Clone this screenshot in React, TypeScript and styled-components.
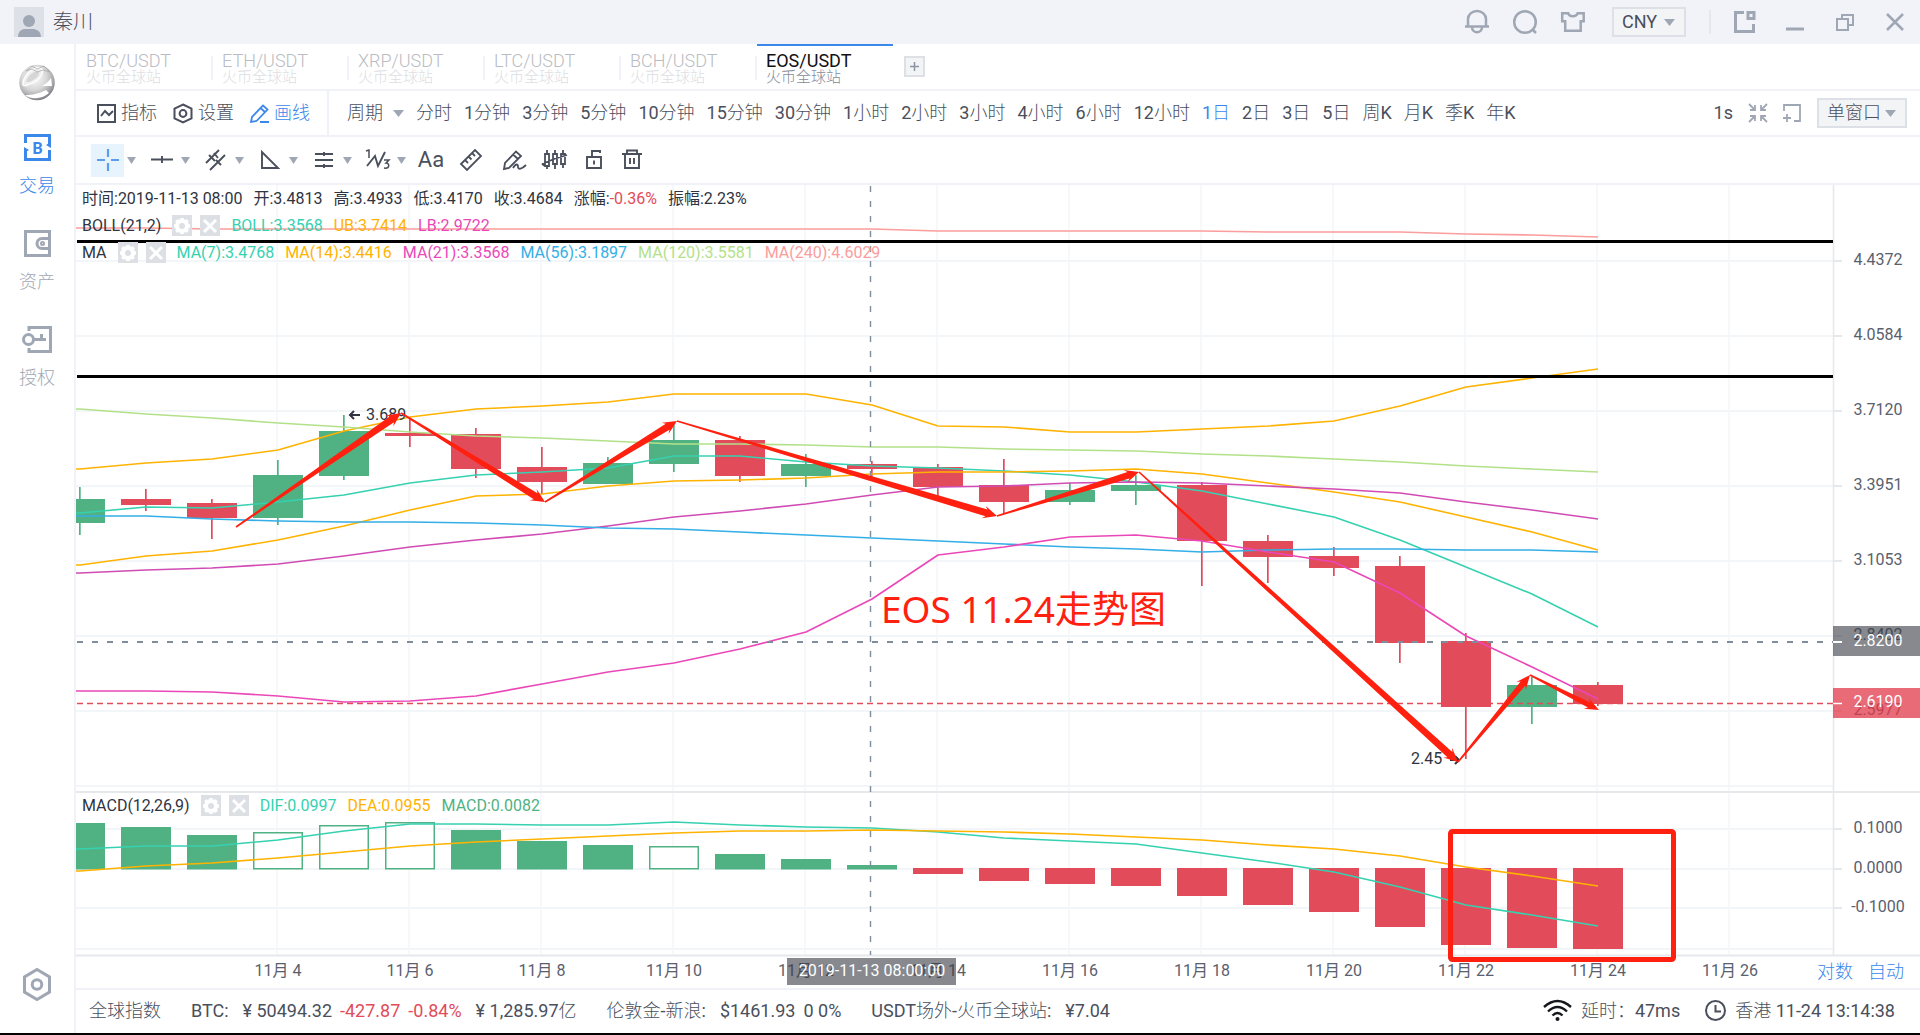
import React from "react";
import styled, { createGlobalStyle, css } from "styled-components";

const c = {
  bar: "#f2f3f8",
  line: "#f1f2f7",
  grid: "#f3f6f9",
  axis: "#e6e8eb",
  text: "#4a4f5c",
  dark: "#2f3440",
  icon: "#a0a7b4",
  blue: "#3b87ea",
  red: "#e24b5a",
  green: "#50b283",
  teal: "#36d1b0",
  yellow: "#ffb300",
  pink: "#ea48b8",
  purple: "#d04cb4",
  sky: "#34aee6",
  lime: "#b3e18a",
  salmon: "#fb9d9c",
  mark: "#ff2010",
};

const Global = createGlobalStyle`
  * { box-sizing: border-box; }
  html, body, #root { height: 100%; }
  body { margin: 0; background: #fff; line-height: 24px; }
  body, button, select { font-family: Roboto, "Noto Sans CJK SC Light", "Noto Sans CJK SC", sans-serif; font-size: 18px; color: ${c.text}; }
  button, select { background: none; border: 0; padding: 0; margin: 0; line-height: inherit; cursor: pointer; }
  svg { display: block; flex: none; overflow: visible; }
`;

const Page = styled.div`
  height: 100%;
  display: flex;
  flex-direction: column;
  border-bottom: 2px solid #000;
  overflow: hidden;
`;

/* ---------- title bar ---------- */
const TitleBar = styled.header`
  height: 44px;
  flex: none;
  display: flex;
  align-items: center;
  justify-content: space-between;
  padding-left: 14px;
  background: ${c.bar};
`;
const User = styled.div`
  display: flex;
  align-items: center;
  gap: 9px;
  font-size: 20px;
  line-height: 24px;
`;
const TitleTools = styled.div`
  display: flex;
  align-items: center;
`;
const IconButton = styled.button<{ $w?: number; $color?: string }>`
  width: ${(p) => p.$w ?? 48}px;
  height: 32px;
  display: flex;
  align-items: center;
  justify-content: center;
  color: ${(p) => p.$color ?? c.icon};
`;
const Currency = styled.div`
  padding: 0 23px 0 15px;
`;
const TitleDivider = styled.span`
  width: 2px;
  height: 24px;
  margin-right: 9px;
  background: #e4e7ed;
`;
const SelectBox = styled.label<{ $w: number }>`
  display: block;
  position: relative;
  width: ${(p) => p.$w}px;
  height: 30px;
  border: 2px solid #dde0e6;
  background: #f3f4f6;
  select {
    display: block;
    appearance: none;
    width: 100%;
    height: 26px;
    padding: 0 20px 0 8px;
    line-height: 26px;
    outline: 0;
  }
  svg {
    position: absolute;
    right: 9px;
    top: 10px;
    pointer-events: none;
  }
`;

/* ---------- frame ---------- */
const Body = styled.div`
  flex: 1;
  min-height: 0;
  display: flex;
`;
const Sidebar = styled.nav`
  width: 76px;
  flex: none;
  display: flex;
  flex-direction: column;
  align-items: center;
  padding: 20px 0 32px;
  border-right: 2px solid ${c.line};
`;
const SideItem = styled.button<{ $active?: boolean }>`
  height: 72px;
  margin-bottom: 24px;
  display: flex;
  flex-direction: column;
  align-items: center;
  justify-content: space-between;
  line-height: 40px;
  color: ${(p) => (p.$active ? c.blue : c.icon)};
  &:first-of-type { margin-top: 33px; }
`;
const SideBottom = styled.button`
  margin-top: auto;
  color: ${c.icon};
`;
const Main = styled.main`
  flex: 1;
  min-width: 0;
  display: flex;
  flex-direction: column;
`;
const Tabs = styled.div`
  height: 47px;
  flex: none;
  display: flex;
  align-items: stretch;
  padding-left: 1px;
  border-bottom: 2px solid ${c.line};
`;
const Tab = styled.button<{ $active?: boolean }>`
  display: flex;
  flex-direction: column;
  width: 136px;
  padding: 6px 0 0 9px;
  text-align: left;
  border-top: 2px solid ${(p) => (p.$active ? c.blue : "transparent")};
  background: linear-gradient(${c.line}, ${c.line}) no-repeat right 10px / ${(p) => (p.$active ? "0 0" : "2px 24px")};
  color: ${(p) => (p.$active ? "#111" : "#b9bcc2")};
  font-weight: 300;
  strong {
    font-size: 18px;
    line-height: 18px;
    font-weight: ${(p) => (p.$active ? 400 : 300)};
  }
  span {
    font-size: 15px;
    line-height: 15px;
    color: ${(p) => (p.$active ? "#858b98" : "#dcdee3")};
  }
`;
const AddTab = styled.button`
  align-self: center;
  width: 21px;
  height: 21px;
  margin-left: 11px;
  display: grid;
  place-items: center;
  border: 2px solid #dde0e5;
  background: #f3f4f6;
  color: #8d94a1;
`;

/* ---------- toolbars ---------- */
const Toolbar = styled.div`
  height: 46px;
  flex: none;
  display: flex;
  align-items: center;
  border-bottom: 2px solid ${c.line};
`;
const ToolGroup = styled.div`
  align-self: stretch;
  display: flex;
  align-items: center;
  gap: 16px;
  padding: 0 17px 0 21px;
  border-right: 2px solid ${c.line};
`;
const ToolButton = styled.button<{ $active?: boolean }>`
  display: flex;
  align-items: center;
  gap: 5px;
  color: ${(p) => (p.$active ? c.blue : c.text)};
`;
const Periods = styled.div`
  flex: 1;
  display: flex;
  align-items: center;
  gap: 12px;
  padding-left: 18px;
  white-space: nowrap;
`;
const Period = styled.button<{ $active?: boolean }>`
  display: flex;
  align-items: center;
  gap: 10px;
  color: ${(p) => (p.$active ? c.blue : c.text)};
`;
const ToolRight = styled.div`
  display: flex;
  align-items: center;
  gap: 16px;
  padding-right: 13px;
`;
const DrawBar = styled(Toolbar)`
  height: 48px;
  padding-left: 15px;
`;
const DrawMenu = styled.div`
  width: 54px;
  display: flex;
  align-items: center;
  gap: 3px;
  &:last-of-type { width: 50px; }
`;
const DrawButton = styled.button<{ $active?: boolean }>`
  width: 33px;
  height: 33px;
  display: grid;
  place-items: center;
  ${(p) => p.$active && css`background: #e7f3fd; color: #5c9eee;`}
`;
const DrawTool = styled(DrawButton)`
  width: 40px;
  font-size: 22px;
`;

/* ---------- chart ---------- */
const ChartArea = styled.section`
  position: relative;
  flex: 1;
  min-height: 0;
  display: grid;
  grid-template-rows: 607fr 163fr 33px;
  border-bottom: 2px solid ${c.line};
`;
const chartFont = `Roboto, "Noto Sans CJK SC", sans-serif`;
const Plot = styled.svg`
  position: absolute;
  left: 0;
  top: 0;
  width: 100%;
  height: 100%;
  font-family: ${chartFont};
  font-size: 16px;
`;
const Pane = styled.div`
  position: relative;
  padding-left: 6px;
`;
const Legend = styled.div`
  height: 27px;
  display: flex;
  align-items: center;
  gap: 11px;
  font-family: ${chartFont};
  font-size: 16px;
  white-space: nowrap;
  color: ${c.dark};
`;
const Value = styled.span<{ $color?: string }>`
  color: ${(p) => p.$color ?? "inherit"};
`;
const MiniButtons = styled.span`
  display: flex;
  gap: 8px;
`;
const MiniButton = styled.button`
  width: 20px;
  height: 21px;
  display: grid;
  place-items: center;
  background: #dcdfe4;
  color: #fff;
`;
const AxisModes = styled.div`
  position: relative;
  display: flex;
  justify-content: flex-end;
  align-items: center;
  gap: 15px;
  padding-right: 16px;
  button { color: ${c.blue}; }
`;

/* ---------- status bar ---------- */
const Status = styled.footer`
  height: 43px;
  flex: none;
  display: flex;
  align-items: center;
  padding: 0 25px 2px 13px;
  white-space: nowrap;
`;
const Quote = styled.div`
  display: flex;
  gap: 8px;
  margin-right: 30px;
`;
const QuoteName = styled.span`
  margin-right: 6px;
`;
const Volume = styled.span`
  margin-left: 6px;
`;
const StatusRight = styled.div`
  margin-left: auto;
  display: flex;
  align-items: center;
  gap: 9px;
`;
const Delay = styled.span`
  margin-right: 16px;
`;

/* ---------- icons ---------- */
const Caret = ({ w = 11 }: { w?: number }) => (
  <svg width={w} height="7" viewBox="0 0 10 6" preserveAspectRatio="none"><path d="M0 0h10L5 6z" fill={c.icon} /></svg>
);
type IconProps = { w: number; h: number; sw?: number; children: React.ReactNode };
const Icon = ({ w, h, sw = 2, children }: IconProps) => (
  <svg width={w} height={h} viewBox={`0 0 ${w} ${h}`} fill="none" stroke="currentColor" strokeWidth={sw}>{children}</svg>
);
const Avatar = () => (
  <svg width="30" height="30" viewBox="0 0 30 30">
    <rect width="30" height="30" fill="#dde1e7" />
    <circle cx="15" cy="14" r="6" fill={c.icon} />
    <path d="M4 30c0-6 4-8 7-8h8c3 0 8 2 8 8z" fill={c.icon} />
  </svg>
);
const Logo = () => (
  <svg width="36" height="37" viewBox="0 0 36 37">
    <defs>
      <radialGradient id="ball" cx="42%" cy="35%" r="66%">
        <stop offset="0" stopColor="#fff" />
        <stop offset="0.55" stopColor="#d6d6d6" />
        <stop offset="0.85" stopColor="#a3a4a7" />
        <stop offset="1" stopColor="#7d7e82" />
      </radialGradient>
    </defs>
    <circle cx="18" cy="18.500" r="17.800" fill="url(#ball)" />
    <path d="M4 21C3 13 14 2 22 4c5 4-2 13-11 16-3 1-6 3-7 1z" fill="#efefef" stroke="#fff" strokeWidth="1.200" />
    <path d="M7 18C9 11 16 6 20 8c1 4-5 8-10 10z" fill="#c4c4c4" opacity=".6" />
    <path d="M23 22c4-2 7-5 9-8l1 8zM6 31c7 0 13-1 21-5l3 3c-7 6-17 7-24 2z" fill="#fff" />
    <path d="M7 7l6-5 5 3 7-3 6 6-7-2-6 2-5-3z" fill="none" stroke="#a5a5a5" strokeWidth=".7" />
  </svg>
);
const Hex = ({ w, h, sw }: { w: number; h: number; sw: number }) => (
  <Icon w={w} h={h} sw={sw}>
    <path d={`M${w / 2} 1.500L${w - 1.5} ${h * 0.27}V${h * 0.73}L${w / 2} ${h - 1.5}L1.500 ${h * 0.73}V${h * 0.27}Z`} />
    <circle cx={w / 2} cy={h / 2} r={w * 0.17} />
  </Icon>
);
const Gear = () => (
  <svg width="18" height="18" viewBox="0 0 18 18">
    <circle cx="9" cy="9" r="5" fill="none" stroke="#fff" strokeWidth="4" />
    <path d="M9 1v16M1 9h16M3.300 3.300l11.400 11.400M14.700 3.300L3.300 14.700" stroke="#fff" strokeWidth="3.500" />
    <circle cx="9" cy="9" r="3" fill="#dcdfe4" />
  </svg>
);
const LegendButtons = ({ name }: { name: string }) => (
  <MiniButtons>
    <MiniButton aria-label={`${name} 设置`}><Gear /></MiniButton>
    <MiniButton aria-label={`${name} 关闭`}><Icon w={16} h={16} sw={3}><path d="M2 2l12 12M14 2L2 14" /></Icon></MiniButton>
  </MiniButtons>
);

/* ---------- chart data: vertical plot positions, one entry per day from 11-01 ---------- */
const TOP = 185;
const LEFT = -1;
const PLOT_W = 1844;
const PLOT_H = 803;
const EDGE = 1756;
const dayX = (i: number) => 3 + 66 * i;

const candles: [number, number, number, number, 0 | 1][] = [
  [487, 499, 523, 535, 1], [489, 499, 505, 511, 0], [499, 503, 518, 539, 0], [460, 475, 518, 525, 1],
  [415, 431, 476, 480, 1], [419, 433, 436, 447, 0], [428, 434, 469, 478, 0], [447, 467, 482, 494, 0],
  [457, 463, 484, 484, 1], [425, 440, 464, 472, 1], [436, 440, 476, 482, 0], [454, 464, 476, 487, 1],
  [461, 464, 469, 477, 0], [464, 467, 487, 497, 0], [459, 485, 502, 514, 0], [483, 490, 502, 505, 1],
  [475, 485, 491, 505, 1], [482, 485, 541, 586, 0], [535, 541, 557, 583, 0], [547, 556, 568, 576, 0],
  [556, 566, 643, 663, 0], [633, 641, 707, 759, 0], [677, 685, 707, 724, 1], [682, 685, 704, 706, 0],
];

const lines: { color: string; y: number[] }[] = [
  { color: c.salmon, y: [228, 228, 229, 229, 229, 229, 229, 229, 229, 229, 229, 229, 229, 231, 231, 231, 231, 231, 232, 232, 232, 234, 235, 237] },
  { color: c.yellow, y: [469, 463, 459, 450, 431, 417, 409, 406, 402, 394, 394, 394, 405, 426, 427, 432, 432, 429, 426, 421, 406, 387, 378, 369] },
  { color: c.lime, y: [409, 414, 418, 423, 427, 432, 436, 438, 441, 444, 444, 445, 447, 447, 449, 450, 451, 454, 456, 459, 462, 466, 469, 472] },
  { color: c.teal, y: [513, 507, 508, 502, 495, 483, 475, 472, 468, 456, 456, 462, 466, 468, 471, 475, 482, 491, 504, 517, 540, 567, 594, 627] },
  { color: c.yellow, y: [565, 556, 551, 540, 526, 510, 496, 494, 486, 481, 480, 478, 474, 472, 472, 471, 469, 474, 483, 492, 502, 517, 532, 550] },
  { color: c.purple, y: [573, 570, 568, 564, 556, 547, 540, 534, 526, 517, 511, 504, 495, 487, 486, 483, 482, 483, 486, 489, 493, 502, 510, 519] },
  { color: c.sky, y: [516, 516, 519, 521, 522, 522, 523, 525, 528, 529, 532, 535, 538, 541, 544, 547, 549, 552, 550, 549, 549, 550, 550, 552] },
  { color: c.pink, y: [691, 691, 692, 696, 702, 701, 696, 684, 672, 663, 649, 632, 599, 555, 547, 537, 535, 541, 552, 562, 593, 636, 667, 699] },
];
const macdLines: { color: string; y: number[] }[] = [
  { color: c.teal, y: [849, 846, 846, 840, 831, 824, 824, 825, 825, 822, 825, 827, 828, 832, 838, 841, 844, 853, 862, 872, 887, 905, 915, 926] },
  { color: c.yellow, y: [871, 866, 863, 858, 852, 846, 842, 839, 836, 833, 831, 831, 830, 831, 832, 834, 837, 840, 845, 849, 856, 867, 876, 886] },
];
const macdBars = [823, 827, 835, 832, 825, 822, 830, 841, 845, 846, 854, 859, 865, 874, 881, 884, 886, 896, 905, 912, 927, 945, 948, 949];
const hollow = new Set([3, 4, 5, 9]);

const prices: [number, string][] = [
  [260, "4.4372"], [335, "4.0584"], [410, "3.7120"], [485, "3.3951"], [560, "3.1053"], [635, "2.8402"], [710, "2.5977"],
];
const macdTicks: [number, string][] = [[828, "0.1000"], [868, "0.0000"], [907, "-0.1000"]];
const dates = [4, 6, 8, 10, 12, 14, 16, 18, 20, 22, 24, 26];

const trend: [number, number][] = [
  [159, 527], [324, 413], [468, 502], [600, 421], [920, 516], [1062, 472], [1381, 762], [1453, 675], [1522, 710],
];

const polyline = (ys: number[]) => `${LEFT},${ys[0]} ` + ys.map((y, i) => `${dayX(i)},${y}`).join(" ");

/* Arrow that widens from a hairline tail into its head. */
function Arrow({ from, to }: { from: [number, number]; to: [number, number] }) {
  const dx = to[0] - from[0];
  const dy = to[1] - from[1];
  const len = Math.hypot(dx, dy);
  const w = Math.min(3.6, 2 + len / 100);
  const shape: [number, number][] = [
    [0, -0.8], [len - 11, -w], [len - 14, -w - 3], [len, 0], [len - 14, w + 3], [len - 11, w], [0, 0.8],
  ];
  const pts = shape.map(([a, b]) => `${from[0] + (a * dx - b * dy) / len},${from[1] + (a * dy + b * dx) / len}`);
  return <polygon points={pts.join(" ")} fill={c.mark} />;
}

function Chart() {
  return (
    <Plot viewBox={`${LEFT} ${TOP} ${PLOT_W} ${PLOT_H}`} preserveAspectRatio="xMinYMin meet" role="img" aria-label="EOS/USDT K线图">
      <defs>
        <clipPath id="plot"><rect x={LEFT} y={TOP} width={EDGE} height="771" /></clipPath>
      </defs>
      <g stroke={c.grid} strokeWidth="2">
        {[...prices.map((p) => p[0]), 785, ...macdTicks.map((t) => t[0]), 948].map((y) => (
          <path key={y} d={`M${LEFT} ${y + 1}H${EDGE}`} />
        ))}
        {dates.map((d) => <path key={d} d={`M${dayX(d - 1) - 1} ${TOP}V955`} strokeWidth="1.500" />)}
      </g>
      <g stroke={c.axis}>
        <path d={`M${LEFT} 792H${PLOT_W}M${LEFT} 955.500H${PLOT_W}`} strokeWidth="2" />
        <path d={`M${EDGE}.500 ${TOP}V955`} strokeWidth="1.500" />
        {[...prices, ...macdTicks].map(([y]) => <path key={y} d={`M${EDGE} ${y + 1}h9`} strokeWidth="2" />)}
      </g>

      <g clipPath="url(#plot)">
        {candles.map(([hi, top, bottom, lo, up], i) => (
          <g key={i} fill={up ? c.green : c.red}>
            <rect x={dayX(i) - 1} y={hi} width="1.700" height={lo - hi} />
            <rect x={dayX(i) - 25} y={top} width="50" height={bottom - top} />
          </g>
        ))}
        {macdBars.map((y, i) => {
          const x = dayX(i) - 25;
          if (hollow.has(i)) return <rect key={i} x={x + 0.75} y={y + 0.75} width="48.500" height={868 - y} fill="#fff" stroke={c.green} strokeWidth="1.500" />;
          return <rect key={i} x={x} y={Math.min(y, 868)} width="50" height={y < 868 ? 869.5 - y : y - 868} fill={y < 868 ? c.green : c.red} />;
        })}
        {[...lines, ...macdLines].map((l, i) => (
          <polyline key={i} points={polyline(l.y)} fill="none" stroke={l.color} strokeWidth="1.600" strokeLinejoin="round" />
        ))}
      </g>

      <g fill={c.dark}>
        <text x="289" y="420">3.689</text>
        <path d="M273 415h10M277 411l-4 4 4 4M1373 760h9M1378 756l4 4-4 4" stroke={c.dark} strokeWidth="2" fill="none" />
        <text x="1334" y="764">2.45</text>
      </g>

      <path d={`M0 241.500H${EDGE}M0 376.500H${EDGE}`} stroke="#000" strokeWidth="3" />
      <path d={`M0 642H${EDGE}`} stroke="#7f8d9c" strokeWidth="2" strokeDasharray="6 9" />
      <path d={`M793.500 ${TOP + 1}V955`} stroke="#7f8d9c" strokeWidth="1.400" strokeDasharray="6 9" />
      <path d={`M0 703.500H${EDGE}`} stroke={c.red} strokeWidth="1.400" strokeDasharray="6 4" />

      {trend.slice(1).map((p, i) => <Arrow key={i} from={trend[i]} to={p} />)}
      <text x="804" y="623" fill={c.mark} fontSize="37" fontFamily='"Noto Sans", "Noto Sans CJK SC", sans-serif'>EOS 11.24走势图</text>

      <g fill="#5a606d" textAnchor="middle">
        {[...prices, ...macdTicks].map(([y, label]) => <text key={label} x="1801" y={y + 5}>{label}</text>)}
        {dates.map((d) => <text key={d} x={dayX(d - 1)} y="976">{`11月 ${d}`}</text>)}
      </g>
      <g textAnchor="middle" fill="#fff">
        <rect x="1756" y="626" width="87" height="30" fill="#373a42" fillOpacity=".6" />
        <path d="M1756 642h9" stroke="#fff" strokeWidth="2" />
        <text x="1801" y="646">2.8200</text>
        <rect x="1756" y="688" width="87" height="30" fill="#e13949" fillOpacity=".75" />
        <path d="M1756 703.500h9" stroke="#fff" strokeWidth="1.500" />
        <text x="1801" y="707">2.6190</text>
        <rect x="710" y="958" width="169" height="27" fill="#373a42" fillOpacity=".6" />
        <text x="795" y="976">2019-11-13 08:00:00</text>
      </g>
      <rect x="1373.500" y="831.500" width="223" height="128" rx="2" fill="none" stroke={c.mark} strokeWidth="5" />
    </Plot>
  );
}

const tabs = ["BTC", "ETH", "XRP", "LTC", "BCH", "EOS"];
const periods = ["分时", "1分钟", "3分钟", "5分钟", "10分钟", "15分钟", "30分钟", "1小时", "2小时", "3小时", "4小时", "6小时", "12小时", "1日", "2日", "3日", "5日", "周K", "月K", "季K", "年K"];

const drawMenus: [string, React.ReactNode][] = [
  ["十字光标", <path d="M0 11h8M14 11h8M11 0v8M11 14v8" strokeWidth="2.200" />],
  ["直线", <path d="M0 10.500h22M11 7v7" />],
  ["平行线", <path d="M1 14L14 1M5 21L20 6M4 6l6 6M11 11l5 5M9 4l4 5" />],
  ["三角形", <path d="M3 3v16h16z" />],
  ["黄金分割", <path d="M2 5h18M2 11h18M2 17h18M11 3v4M11 15v4" />],
  ["波浪", <><path d="M-1 2l3-1v8" strokeWidth="1.500" /><path d="M0 17L8 7l3 10 7-14" /><path d="M17 11h5l-3 3c4 0 4 6-2 5" strokeWidth="1.500" /></>],
];

export default function App() {
  return (
    <Page>
      <Global />
      <TitleBar>
        <User><Avatar />秦川</User>
        <TitleTools>
          <IconButton aria-label="通知"><Icon w={24} h={24} sw={2.5}><path d="M0 16.500h24M3 16V9a9 8 0 0 1 18 0v7M7 17c0 7 10 7 10 0" /></Icon></IconButton>
          <IconButton aria-label="搜索"><Icon w={24} h={24} sw={2.5}><circle cx="12" cy="12" r="10.800" /><path d="M19 19l4 4" /></Icon></IconButton>
          <IconButton aria-label="皮肤"><Icon w={24} h={20} sw={2.5}><path d="M1.200 1.200h6c1 4 8 4 9.500 0h6v8h-3v9.500H4.200V9.200h-3z" /></Icon></IconButton>
          <Currency>
            <SelectBox $w={74}><select aria-label="货币" defaultValue="CNY"><option>CNY</option></select><Caret /></SelectBox>
          </Currency>
          <TitleDivider />
          <IconButton $w={50} aria-label="弹出窗口"><Icon w={22} h={22} sw={3}><path d="M10 1.500H1.500v19h18V13" /><rect x="14" y="1.500" width="6" height="6" /></Icon></IconButton>
          <IconButton $w={50} aria-label="最小化"><Icon w={18} h={18} sw={3}><path d="M0 16h18" /></Icon></IconButton>
          <IconButton $w={50} aria-label="还原"><Icon w={18} h={18} sw={2}><path d="M1 6h11v11H1zM6 6V2h11v10h-5" /></Icon></IconButton>
          <IconButton $w={50} aria-label="关闭"><Icon w={18} h={18} sw={2.5}><path d="M1 1l16 16M17 1L1 17" /></Icon></IconButton>
        </TitleTools>
      </TitleBar>

      <Body>
        <Sidebar>
          <Logo />
          <SideItem $active>
            <Icon w={27} h={27} sw={3}>
              <path d="M1.500 9V1.500h24V11M1.500 17v8.500h24V16" />
              <path d="M0 13l5 3-5 3zM27 14l-5-3 5-3z" fill="currentColor" stroke="none" />
              <text x="13.500" y="19.500" textAnchor="middle" fontSize="16" fontWeight="700" fill="currentColor" stroke="none">B</text>
            </Icon>
            交易
          </SideItem>
          <SideItem>
            <Icon w={27} h={27} sw={3}><path d="M25.500 7V1.500h-24v24h24V20M27 8.500h-9a5 5 0 0 0 0 10h9M25.500 7v13" /><circle cx="18.500" cy="13.500" r="1" /></Icon>
            资产
          </SideItem>
          <SideItem>
            <Icon w={30} h={27} sw={3}><path d="M7 5V1.500h21.500v24H7V22M12 13.500h12M19.500 8v5" /><circle cx="6.500" cy="13.500" r="5" /></Icon>
            授权
          </SideItem>
          <SideBottom aria-label="设置"><Hex w={28} h={33} sw={3} /></SideBottom>
        </Sidebar>

        <Main>
          <Tabs>
            {tabs.map((t) => (
              <Tab key={t} $active={t === "EOS"}><strong>{t}/USDT</strong><span>火币全球站</span></Tab>
            ))}
            <AddTab aria-label="添加"><Icon w={9} h={9} sw={1.5}><path d="M0 4.500h9M4.500 0v9" /></Icon></AddTab>
          </Tabs>

          <Toolbar>
            <ToolGroup>
              <ToolButton><Icon w={19} h={19}><path d="M1 1h17v17H1zM4 12l4-5 4 4 4-4" /></Icon>指标</ToolButton>
              <ToolButton><Hex w={20} h={21} sw={2} />设置</ToolButton>
              <ToolButton $active><Icon w={19} h={19} sw={1.8}><path d="M1 18l1-5L13 1.500l4.500 4L6.500 17zM10.500 4l5 4.500M10 18h9" /></Icon>画线</ToolButton>
            </ToolGroup>
            <Periods>
              <Period>周期<Caret /></Period>
              {periods.map((p) => <Period key={p} $active={p === "1日"}>{p}</Period>)}
            </Periods>
            <ToolRight>
              <span>1s</span>
              <IconButton $w={18} aria-label="收起"><Icon w={18} h={18} sw={1.8}><path d="M0 0l6 6M1 6h5V1M18 0l-6 6M17 6h-5V1M0 18l6-6M1 12h5v5M18 18l-6-6M17 12h-5v5" /></Icon></IconButton>
              <IconButton $w={18} aria-label="添加窗口"><Icon w={18} h={18} sw={1.8}><path d="M1 7V1h16v16h-6M0 14h8M4 10v8" /></Icon></IconButton>
              <SelectBox $w={90}><select aria-label="窗口布局" defaultValue="单窗口"><option>单窗口</option></select><Caret /></SelectBox>
            </ToolRight>
          </Toolbar>

          <DrawBar>
            {drawMenus.map(([name, d], i) => (
              <DrawMenu key={name}>
                <DrawButton $active={i === 0} aria-label={name}><Icon w={22} h={22} sw={1.9}>{d}</Icon></DrawButton>
                <Caret w={9} />
              </DrawMenu>
            ))}
            <DrawTool aria-label="文字">Aa</DrawTool>
            <DrawTool aria-label="测量"><Icon w={22} h={22} sw={1.8}><path d="M1 15L15 1l6 6L7 21zM5 11l3 3M8.500 7.500l3 3M12 4l3 3" /></Icon></DrawTool>
            <DrawTool aria-label="画笔"><Icon w={22} h={22} sw={1.8}><path d="M4 20l1-6L16 2.500l5 4.500L9 19zM13 5.500l5 4.500M13 19c3-5 5-4 5-1s4 2 8-2" /></Icon></DrawTool>
            <DrawTool aria-label="K线"><Icon w={22} h={22} sw={1.8}><path d="M5 5h4v12H5zM13 5h4v10h-4zM21 5h4v10h-4zM7 1v4M7 17v3M15 1v4M15 15v5M23 1v4M23 15v4M2 15l12-5 13-4M2 15l3 2" /></Icon></DrawTool>
            <DrawTool aria-label="锁定"><Icon w={22} h={22} sw={1.9}><path d="M7 8h14v11H7zM12 8V2h8v2M14 11.500v4" /></Icon></DrawTool>
            <DrawTool aria-label="删除"><Icon w={22} h={22} sw={1.9}><path d="M2 5h20M5 5v14h14V5M7 5V1.500h10V5M10 9v6M14 9v6" /></Icon></DrawTool>
          </DrawBar>

          <ChartArea>
            <Chart />
            <Pane>
              <Legend>
                <Value>时间:2019-11-13 08:00</Value><Value>开:3.4813</Value><Value>高:3.4933</Value><Value>低:3.4170</Value><Value>收:3.4684</Value>
                <Value>涨幅:<Value $color={c.red}>-0.36%</Value></Value><Value>振幅:2.23%</Value>
              </Legend>
              <Legend>
                <Value>BOLL(21,2)</Value><LegendButtons name="BOLL" />
                <Value $color={c.teal}>BOLL:3.3568</Value><Value $color={c.yellow}>UB:3.7414</Value><Value $color={c.pink}>LB:2.9722</Value>
              </Legend>
              <Legend>
                <Value>MA</Value><LegendButtons name="MA" />
                <Value $color={c.teal}>MA(7):3.4768</Value><Value $color={c.yellow}>MA(14):3.4416</Value><Value $color={c.pink}>MA(21):3.3568</Value>
                <Value $color={c.sky}>MA(56):3.1897</Value><Value $color={c.lime}>MA(120):3.5581</Value><Value $color={c.salmon}>MA(240):4.6029</Value>
              </Legend>
            </Pane>
            <Pane>
              <Legend>
                <Value>MACD(12,26,9)</Value><LegendButtons name="MACD" />
                <Value $color={c.teal}>DIF:0.0997</Value><Value $color={c.yellow}>DEA:0.0955</Value><Value $color={c.green}>MACD:0.0082</Value>
              </Legend>
            </Pane>
            <AxisModes><button>对数</button><button>自动</button></AxisModes>
          </ChartArea>

          <Status>
            <Quote>全球指数</Quote>
            <Quote>
              <QuoteName>BTC:</QuoteName><span>¥ 50494.32</span>
              <Value $color={c.red}>-427.87</Value><Value $color={c.red}>-0.84%</Value><Volume>¥ 1,285.97亿</Volume>
            </Quote>
            <Quote><QuoteName>伦敦金-新浪:</QuoteName><span>$1461.93</span><span>0 0%</span></Quote>
            <Quote><QuoteName>USDT场外-火币全球站:</QuoteName><span>¥7.04</span></Quote>
            <StatusRight>
              <Icon w={29} h={21} sw={2.4}>
                <path d="M1 7Q14.500-5 28 7M5 11.500Q14.500 2.500 24 11.500M9.500 15.500Q14.500 10.500 19.500 15.500" stroke="#15171c" />
                <circle cx="14.500" cy="19" r="2" fill="#15171c" stroke="none" />
              </Icon>
              <Delay>延时：47ms</Delay>
              <Icon w={21} h={21}><circle cx="10.500" cy="10.500" r="9.500" /><path d="M10.500 5v6.500H16" /></Icon>
              <span>香港 11-24 13:14:38</span>
            </StatusRight>
          </Status>
        </Main>
      </Body>
    </Page>
  );
}
